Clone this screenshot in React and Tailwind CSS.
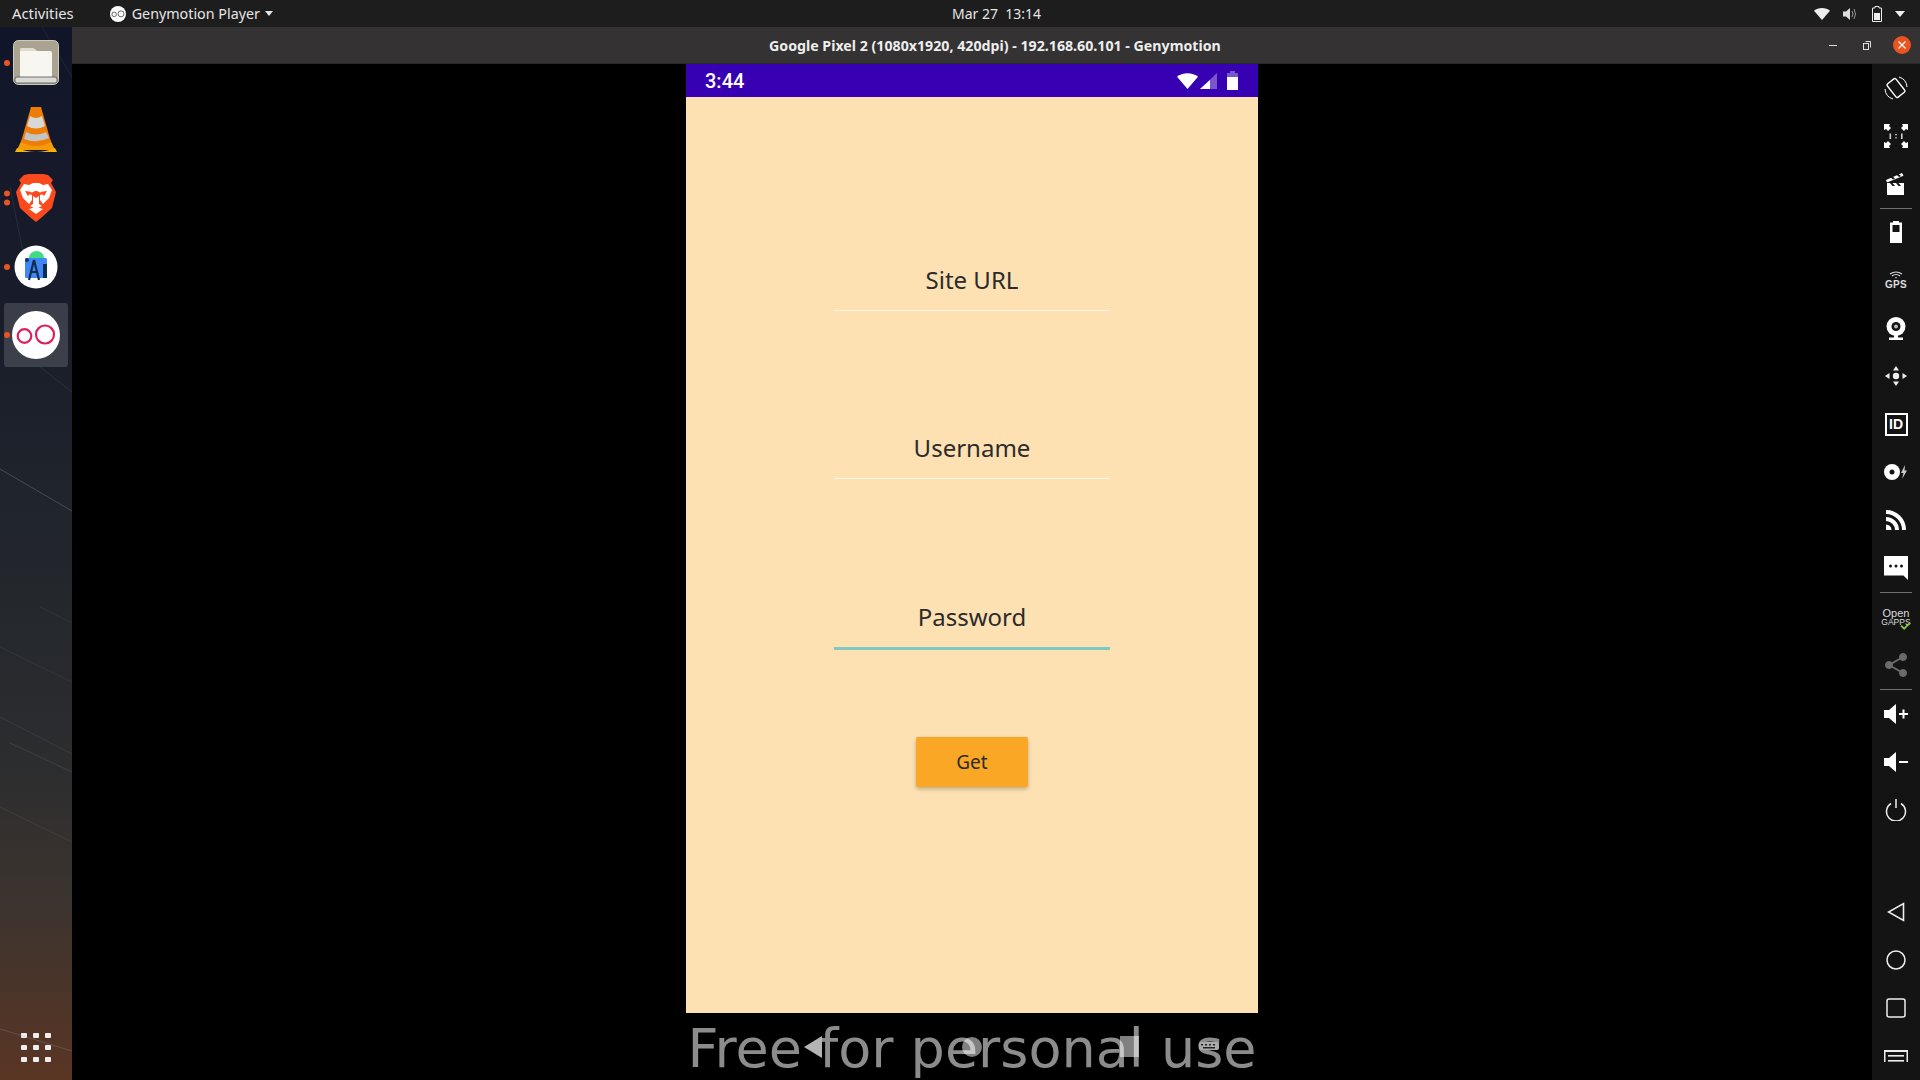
const FONT = "font-['Noto_Sans','Open_Sans',sans-serif]";

const Wifi = ({ className, fill = "#fff" }) => (
  <svg viewBox="0 0 20 15" className={className} preserveAspectRatio="none">
    <path d="M0 3.5 C5-1 15-1 20 3.5 L10 15 Z" fill={fill} />
  </svg>
);

const Genymotion = ({ size = 16, stroke = "#dd1f5f", bg = "#fff" }) => (
  <svg viewBox="0 0 48 48" width={size} height={size}>
    <circle cx="24" cy="24" r="24" fill={bg} />
    <circle cx="12.5" cy="25" r="6.8" fill="none" stroke={stroke} strokeWidth="2.2" />
    <circle cx="33" cy="23.5" r="9" fill="none" stroke={stroke} strokeWidth="2.2" />
  </svg>
);

const Files = () => (
  <svg viewBox="0 0 46 46" width="46" height="46">
    <rect x="0.5" y="0.5" width="45" height="44" rx="5" fill="#aaa391" stroke="#cfcabb" />
    <path d="M7 10 q0-2 2-2 h11 l4 3 h13 q2 0 2 2 v23 q0 2-2 2 H9 q-2 0-2-2 Z" fill="#f8f6f1" />
    <path d="M7 10 q0-2 2-2 h11 l4 3 H7 Z" fill="#dedacd" />
    <rect x="2" y="37" width="42" height="6" rx="2" fill="#d9d9d7" stroke="#55534c" strokeWidth="0.8" />
  </svg>
);

const Vlc = () => (
  <svg viewBox="0 0 42 48" width="42" height="48">
    <path d="M2 44 L8 31 H34 L40 44 Z" fill="#f49a0b" />
    <path d="M0 46 L2 42 Q21 50 40 42 L42 46 Z" fill="#f7b500" />
    <path d="M16 1 H26 L36 36 Q21 44 6 36 Z" fill="#ee7d05" />
    <path d="M15 10 Q21 14 27 10 L30 20 Q21 25 12 20 Z" fill="#d8d8d8" />
    <path d="M11 26 Q21 31 31 26 L34 32 Q21 38 9 33 Z" fill="#c3c4c6" />
  </svg>
);

const Brave = () => (
  <svg viewBox="0 0 42 48" width="42" height="48">
    <path d="M9 1 L14 0 H28 L33 1 L38 6 L36 9 L41 18 L37 34 L26 44 L21 48 L16 44 L5 34 L1 18 L6 9 L4 6 Z" fill="#fb4a1d" />
    <path d="M5 16 L9 10 L14 11 L18 9 H24 L28 11 L33 10 L37 16 L34 24 L28 30 L25 26 V21 L28 20 L22 17 H20 L14 20 L17 21 V26 L14 30 L8 24 Z" fill="#fff" />
    <path d="M10 17 L17 18 L13 22 Z M32 17 L25 18 L29 22 Z" fill="#fb4a1d" />
    <path d="M18 22 L21 24 L24 22 V30 L27 32 L21 35 L15 32 L18 30 Z" fill="#fff" />
    <path d="M14 35 L21 33 L28 35 L21 40 Z" fill="#fff" />
  </svg>
);

const AndroidStudio = () => (
  <svg viewBox="0 0 44 44" width="44" height="44">
    <circle cx="22" cy="22" r="21.5" fill="#fff" />
    <path d="M15 13 A7.5 7 0 0 1 30 13 Z" fill="#3ddc84" />
    <rect x="11" y="13" width="22" height="20" rx="1.5" fill="#4285f4" />
    <rect x="11" y="13" width="4" height="4" rx="2" fill="#0c3b66" />
    <path d="M20 15 L15 35 M20 15 L25 35 M16 27 H24" stroke="#0c2e4e" strokeWidth="2.2" fill="none" />
    <rect x="29" y="19" width="4" height="14" fill="#0c2e4e" />
  </svg>
);

const toolIcons = {
  rotate: (
    <svg viewBox="0 0 24 24" width="24" height="24" fill="none" stroke="#fff">
      <rect x="6.5" y="3.5" width="11" height="17" rx="1.6" transform="rotate(-38 12 12)" strokeWidth="1.4" />
      <path d="M15 1 A11.2 11.2 0 0 1 23 11 M9 23 A11.2 11.2 0 0 1 1 13" strokeWidth="1" />
    </svg>
  ),
  oneToOne: (
    <svg viewBox="0 0 24 24" width="24" height="24" fill="#fff">
      <path d="M0 0 H6 L5 2 L7 4 L4 7 L2 5 L0 6 Z M24 0 V6 L22 5 L20 7 L17 4 L19 2 L18 0 Z M0 24 V18 L2 19 L4 17 L7 20 L5 22 L6 24 Z M24 24 H18 L19 22 L17 20 L20 17 L22 19 L24 18 Z" />
      <rect x="5.5" y="9.5" width="1.6" height="5.5" fill="#ccc" />
      <rect x="17" y="9.5" width="1.6" height="5.5" fill="#ccc" />
      <rect x="11.3" y="10" width="1.4" height="1.4" fill="#ccc" />
      <rect x="11.3" y="13" width="1.4" height="1.4" fill="#ccc" />
    </svg>
  ),
  clap: (
    <svg viewBox="0 0 20 22" width="20" height="22" fill="#fff">
      <path d="M0 7 L16 0 L17.5 2.8 L1 9.5 Z" />
      <path d="M1 10 H18 V22 H1 Z" />
      <path d="M4 10 L6.5 13 H9 L6.5 10 Z M10 10 L12.5 13 H15 L12.5 10 Z M4 3.8 L7 6.5 L9 5.6 L6 2.9 Z M10 1.2 L13 4 L15 3 L12 .4 Z" fill="#141414" />
    </svg>
  ),
  battery: (
    <svg viewBox="0 0 12 22" width="12" height="22">
      <path d="M3 0 H9 V1.5 H12 V22 H0 V1.5 H3 Z" fill="#fff" />
      <rect x="2.5" y="4" width="7" height="7" fill="#141414" />
    </svg>
  ),
  gps: (
    <span className="flex flex-col items-center leading-none">
      <svg viewBox="0 0 14 8" width="14" height="8" fill="none" stroke="#ddd" strokeWidth="1.1">
        <path d="M1 3 Q7 -1 13 3 M3 5 Q7 2 11 5" />
        <circle cx="7" cy="6.8" r="0.8" fill="#ddd" stroke="none" />
      </svg>
      <span className="mt-[1px] font-['Liberation_Sans',sans-serif] text-[10px] font-bold tracking-[0.3px] text-[#ddd]">GPS</span>
    </span>
  ),
  webcam: (
    <svg viewBox="0 0 20 23" width="20" height="23">
      <circle cx="10" cy="9.5" r="9.5" fill="#fff" />
      <circle cx="10" cy="9.5" r="4.5" fill="#141414" />
      <circle cx="10" cy="9.5" r="2" fill="#bbb" />
      <rect x="8" y="18" width="4" height="3" fill="#fff" />
      <rect x="3" y="20.5" width="14" height="2.5" fill="#fff" />
    </svg>
  ),
  move: (
    <svg viewBox="0 0 24 24" width="24" height="24" fill="#eee">
      <path d="M12 2 L15 6.5 H9 Z M12 22 L9 17.5 H15 Z M1 12 L5.5 9 V15 Z M23 12 L18.5 15 V9 Z" />
      <circle cx="12" cy="12" r="3.2" />
    </svg>
  ),
  id: (
    <span className="flex h-[23px] w-[23px] items-center justify-center border-2 border-white font-['Liberation_Sans',sans-serif] text-[14px] font-bold leading-none text-white">
      ID
    </span>
  ),
  disk: (
    <svg viewBox="0 0 24 16" width="24" height="16">
      <circle cx="8" cy="8" r="8" fill="#fff" />
      <circle cx="8" cy="8" r="2.5" fill="#141414" />
      <path d="M21 1 L17 9 H19.5 L18 15 L23 6.5 H20.5 Z" fill="#ccc" />
    </svg>
  ),
  rss: (
    <svg viewBox="0 0 20 20" width="20" height="20" fill="none" stroke="#fff" strokeWidth="4">
      <path d="M0 2 A18 18 0 0 1 18 20 M0 9 A11 11 0 0 1 11 20" />
      <path d="M0 14.5 A5.5 5.5 0 0 1 5.5 20 H0 Z" fill="#fff" stroke="none" />
    </svg>
  ),
  sms: (
    <svg viewBox="0 0 24 24" width="24" height="24">
      <path d="M0 0 H24 V24 L19.5 19.5 H0 Z" fill="#fff" />
      <circle cx="6.5" cy="10" r="1.5" fill="#141414" />
      <circle cx="12" cy="10" r="1.5" fill="#141414" />
      <circle cx="17.5" cy="10" r="1.5" fill="#141414" />
    </svg>
  ),
  gapps: (
    <span className="relative flex flex-col items-center font-['Liberation_Sans',sans-serif] leading-none text-[#ddd]">
      <span className="text-[11px]">Open</span>
      <span className="-mt-px text-[8.5px]">GAPPS</span>
      <svg viewBox="0 0 12 9" width="11" height="8" className="absolute -bottom-[4px] right-0">
        <path d="M1 4 L4.5 7.5 L11 1" fill="none" stroke="#8bc34a" strokeWidth="2" />
      </svg>
    </span>
  ),
  share: (
    <svg viewBox="0 0 22 24" width="22" height="24" fill="#6b6b6b" stroke="#6b6b6b">
      <path d="M4 12 L18 4 M4 12 L18 20" strokeWidth="2" />
      <circle cx="4" cy="12" r="3.5" />
      <circle cx="18" cy="4" r="3.5" />
      <circle cx="18" cy="20" r="3.5" />
    </svg>
  ),
  volUp: (
    <svg viewBox="0 0 24 20" width="24" height="20" fill="#fff">
      <path d="M0 6 H5 L12 0 V20 L5 14 H0 Z" />
      <path d="M15 9 H18.5 V5.5 H20.5 V9 H24 V11 H20.5 V14.5 H18.5 V11 H15 Z" />
    </svg>
  ),
  volDown: (
    <svg viewBox="0 0 24 20" width="24" height="20" fill="#fff">
      <path d="M0 6 H5 L12 0 V20 L5 14 H0 Z" />
      <rect x="15" y="9" width="9" height="2" />
    </svg>
  ),
  power: (
    <svg viewBox="0 0 22 22" width="22" height="22" fill="none" stroke="#eee" strokeWidth="1.5">
      <path d="M6 4.5 A9.5 9.5 0 1 0 16 4.5 M11 0 V9" />
    </svg>
  ),
  back: (
    <svg viewBox="0 0 18 20" width="18" height="20" fill="none" stroke="#eee" strokeWidth="1.6">
      <path d="M16.5 1.5 V18.5 L1.5 10 Z" />
    </svg>
  ),
  home: (
    <svg viewBox="0 0 20 20" width="20" height="20" fill="none" stroke="#eee" strokeWidth="1.5">
      <circle cx="10" cy="10" r="9" />
    </svg>
  ),
  square: (
    <svg viewBox="0 0 20 20" width="20" height="20" fill="none" stroke="#eee" strokeWidth="1.5">
      <rect x="1" y="1" width="18" height="18" rx="2" />
    </svg>
  ),
  menu: (
    <svg viewBox="0 0 24 12" width="24" height="12" fill="#eee">
      <path d="M0 0 H24 V12 H22.5 V2 H1.5 V12 H0 Z" />
      <rect x="4" y="5" width="16" height="1.6" />
      <rect x="4" y="10" width="16" height="1.6" />
    </svg>
  ),
};

const Tool = ({ name, className = "" }) => (
  <div className={`flex h-12 w-full items-center justify-center ${className}`}>{toolIcons[name]}</div>
);

const Divider = () => <div className="mx-auto h-px w-8 bg-[#707070]" />;

const Toolbar = () => (
  <aside className="flex w-12 flex-col bg-[#141414]">
    <Tool name="rotate" />
    <Tool name="oneToOne" />
    <Tool name="clap" />
    <Divider />
    <div className="-mt-px">
      <Tool name="battery" />
    </div>
    <Tool name="gps" />
    <Tool name="webcam" />
    <Tool name="move" />
    <Tool name="id" />
    <Tool name="disk" />
    <Tool name="rss" />
    <Tool name="sms" />
    <Divider />
    <Tool name="gapps" />
    <Tool name="share" />
    <Divider />
    <Tool name="volUp" />
    <Tool name="volDown" />
    <Tool name="power" />
    <div className="flex-1" />
    <Tool name="back" />
    <Tool name="home" />
    <Tool name="square" />
    <Tool name="menu" />
  </aside>
);

const Dots = ({ count = 1 }) => (
  <span className="absolute left-[4px] top-1/2 flex -translate-y-1/2 flex-col gap-[3px]">
    {Array.from({ length: count }).map((_, i) => (
      <span key={i} className="h-[6px] w-[6px] rounded-full bg-[#e95420]" />
    ))}
  </span>
);

const DockItem = ({ children, dots, className = "" }) => (
  <div className={`relative flex w-full items-center justify-center ${className}`}>
    {dots ? <Dots count={dots} /> : null}
    {children}
  </div>
);

const Dock = () => (
  <aside className="relative flex w-[72px] flex-col items-center overflow-hidden bg-[linear-gradient(180deg,#11152a_0%,#181c2a_25%,#22262c_50%,#2c2d2f_70%,#3d342e_84%,#5a3524_100%)] pt-[13px]">
    <svg viewBox="0 0 72 1053" className="absolute inset-0 h-full w-full" fill="none" stroke="#8a93a0" strokeWidth="1">
      <path d="M0 442 L72 484" opacity="0.35" />
      <path d="M40 340 L72 365" opacity="0.15" />
      <path d="M42 0 L72 50" opacity="0.12" />
      <path d="M10 160 L24 230" opacity="0.15" />
      <path d="M40 580 L72 596" opacity="0.12" />
      <path d="M0 620 L72 655" opacity="0.12" />
      <path d="M0 690 L72 727" opacity="0.15" />
      <path d="M10 716 L72 745" opacity="0.2" />
      <path d="M0 780 L72 815" opacity="0.15" />
      <path d="M0 1002 L72 1024" opacity="0.3" />
    </svg>
    <DockItem dots={1} className="h-[46px]">
      <Files />
    </DockItem>
    <DockItem className="mt-[20px] h-[48px]">
      <Vlc />
    </DockItem>
    <DockItem dots={2} className="mt-[20px] h-[48px]">
      <Brave />
    </DockItem>
    <DockItem dots={1} className="mt-[23px] h-[44px]">
      <AndroidStudio />
    </DockItem>
    <DockItem dots={1} className="mt-[14px] h-[64px]">
      <span className="flex h-[64px] w-[64px] items-center justify-center rounded-[3px] bg-white/15">
        <Genymotion size={48} />
      </span>
    </DockItem>
    <div className="mb-[18px] mt-auto grid grid-cols-3 gap-x-[6px] gap-y-[7px]">
      {Array.from({ length: 9 }).map((_, i) => (
        <span key={i} className="h-[5px] w-[6px] rounded-[1px] bg-[#eee]" />
      ))}
    </div>
  </aside>
);

const TopBar = () => (
  <header className="relative flex h-[27px] items-center bg-[#1d1d1d] text-[14.3px] text-[#e6e6e6]">
    <span className="ml-3 text-[14.8px]">Activities</span>
    <span className="ml-[36px] flex items-center">
      <Genymotion size={16} stroke="#333" />
      <span className="ml-[6px]">Genymotion Player</span>
      <span className="ml-[5px] h-0 w-0 border-x-[4.5px] border-t-[5px] border-x-transparent border-t-[#e6e6e6]" />
    </span>
    <span className="absolute left-[952px] whitespace-pre text-[14px]">Mar 27  13:14</span>
    <span className="ml-auto flex items-center">
      <Wifi className="h-[12px] w-[16px]" fill="#eee" />
      <svg viewBox="0 0 14 14" width="14" height="14" className="ml-[13px]" fill="#ddd">
        <path d="M0 4.5 H3 L7 1 V13 L3 9.5 H0 Z" />
        <path d="M9 4 Q11 7 9 10 M11 2 Q14 7 11 12" fill="none" stroke="#999" strokeWidth="1" />
      </svg>
      <svg viewBox="0 0 10 16" width="10" height="16" className="ml-[15px]">
        <path d="M3 .5 H7 V2 H9.5 V15.5 H.5 V2 H3 Z" fill="none" stroke="#eee" />
        <rect x="2" y="7" width="6" height="7" fill="#eee" />
      </svg>
      <span className="ml-[13px] mr-[15px] h-0 w-0 border-x-[5px] border-t-[6px] border-x-transparent border-t-[#eee]" />
    </span>
  </header>
);

const TitleBar = () => (
  <div className="relative flex h-[37px] items-center justify-end border-b border-[#2b2a2a] bg-[#343233]">
    <span className="absolute left-[697px] top-[8px] whitespace-nowrap text-[14.2px] font-bold text-[#eee]">
      Google Pixel 2 (1080x1920, 420dpi) - 192.168.60.101 - Genymotion
    </span>
    <span className="h-px w-2 bg-[#ddd]" />
    <svg viewBox="0 0 8 9" width="8" height="9" className="ml-[26px]" fill="none" stroke="#ddd">
      <rect x="0.5" y="2.5" width="5" height="6" />
      <path d="M2.5 .5 H7.5 V6.5" />
    </svg>
    <span className="ml-[22px] mr-[9px] flex h-[18px] w-[18px] items-center justify-center rounded-full bg-[#e95420]">
      <svg viewBox="0 0 8 8" width="8" height="8" stroke="#fff" strokeWidth="1.2">
        <path d="M0.5 0.5 L7.5 7.5 M7.5 0.5 L0.5 7.5" />
      </svg>
    </span>
  </div>
);

const StatusBar = () => (
  <div className="flex h-[33px] items-center bg-[#3700b3] pl-[19px] pr-[20px]">
    <span className="font-['Roboto',sans-serif] text-[20px] font-medium text-white">3:44</span>
    <span className="ml-auto flex items-center">
      <Wifi className="h-[16px] w-[21px]" />
      <svg viewBox="0 0 17 16" width="17" height="16" className="ml-[2px]">
        <path d="M17 0 V16 H0 Z" fill="#7857cd" />
        <path d="M10 7 V16 H0 Z" fill="#fff" />
      </svg>
      <svg viewBox="0 0 11 19" width="11" height="19" className="ml-[10px]">
        <path d="M3 0 H8 V2 H11 V19 H0 V2 H3 Z" fill="#7857cd" />
        <rect y="6" width="11" height="13" fill="#fff" />
      </svg>
    </span>
  </div>
);

const Field = ({ label, active, className = "" }) => (
  <div className={`flex w-[276px] flex-col items-center ${className}`}>
    <span className="h-[34px] text-[24px] leading-[34px] text-[#2b2b2b]">{label}</span>
    <span className={active ? "mt-[13px] h-[3px] w-full bg-[#7fcabf]" : "mt-[13px] h-px w-full bg-[#fff6ea]"} />
  </div>
);

const Phone = () => (
  <div className="flex w-[572px] flex-col">
    <StatusBar />
    <main className="flex h-[916px] flex-col items-center bg-[#fee1b3] pt-[166px]">
      <Field label="Site URL" />
      <Field label="Username" className="mt-[120px]" />
      <Field label="Password" active className="mt-[121px]" />
      <button className="mt-[87px] h-[50px] w-[112px] rounded-[2px] bg-[#faa726] text-[19px] text-[#2b2b2b] shadow-[0_2px_4px_rgba(0,0,0,0.25)]">
        Get
      </button>
    </main>
    <div className="relative flex h-[67px] items-start justify-center overflow-hidden bg-black">
      <span className="mt-[1px] whitespace-nowrap font-['DejaVu_Sans',sans-serif] text-[54px] leading-[70px] text-[#8c8c8c]">
        Free for personal use
      </span>
      {/* android nav buttons sit over the watermark */}
      <svg viewBox="0 0 18 22" width="18" height="22" className="absolute left-[118px] top-[23px]">
        <path d="M18 0 V22 L0 11 Z" fill="#b4b4b4" />
      </svg>
      <span className="absolute left-[276px] top-[24px] h-[20px] w-[20px] rounded-full bg-white/50" />
      <span className="absolute left-[434px] top-[23px] h-[21px] w-[19px] bg-white/50" />
      <svg viewBox="0 0 20 8" width="20" height="8" className="absolute left-[513px] top-[29px]">
        <rect width="20" height="8" rx="2" fill="#aaa" />
        <path d="M2 2h2v1.5H2zM6 2h2v1.5H6zM10 2h2v1.5h-2zM14 2h2v1.5h-2zM4 5h12v1.5H4z" fill="#222" />
      </svg>
    </div>
  </div>
);

const App = () => {
  return (
    <div className={`flex h-[1080px] w-[1920px] flex-col overflow-hidden bg-black ${FONT}`}>
      <TopBar />
      <div className="flex min-h-0 flex-1">
        <Dock />
        <div className="flex min-w-0 flex-1 flex-col">
          <TitleBar />
          <div className="flex min-h-0 flex-1">
            <div className="flex flex-1 justify-center">
              <Phone />
            </div>
            <Toolbar />
          </div>
        </div>
      </div>
    </div>
  );
};

export default App;
